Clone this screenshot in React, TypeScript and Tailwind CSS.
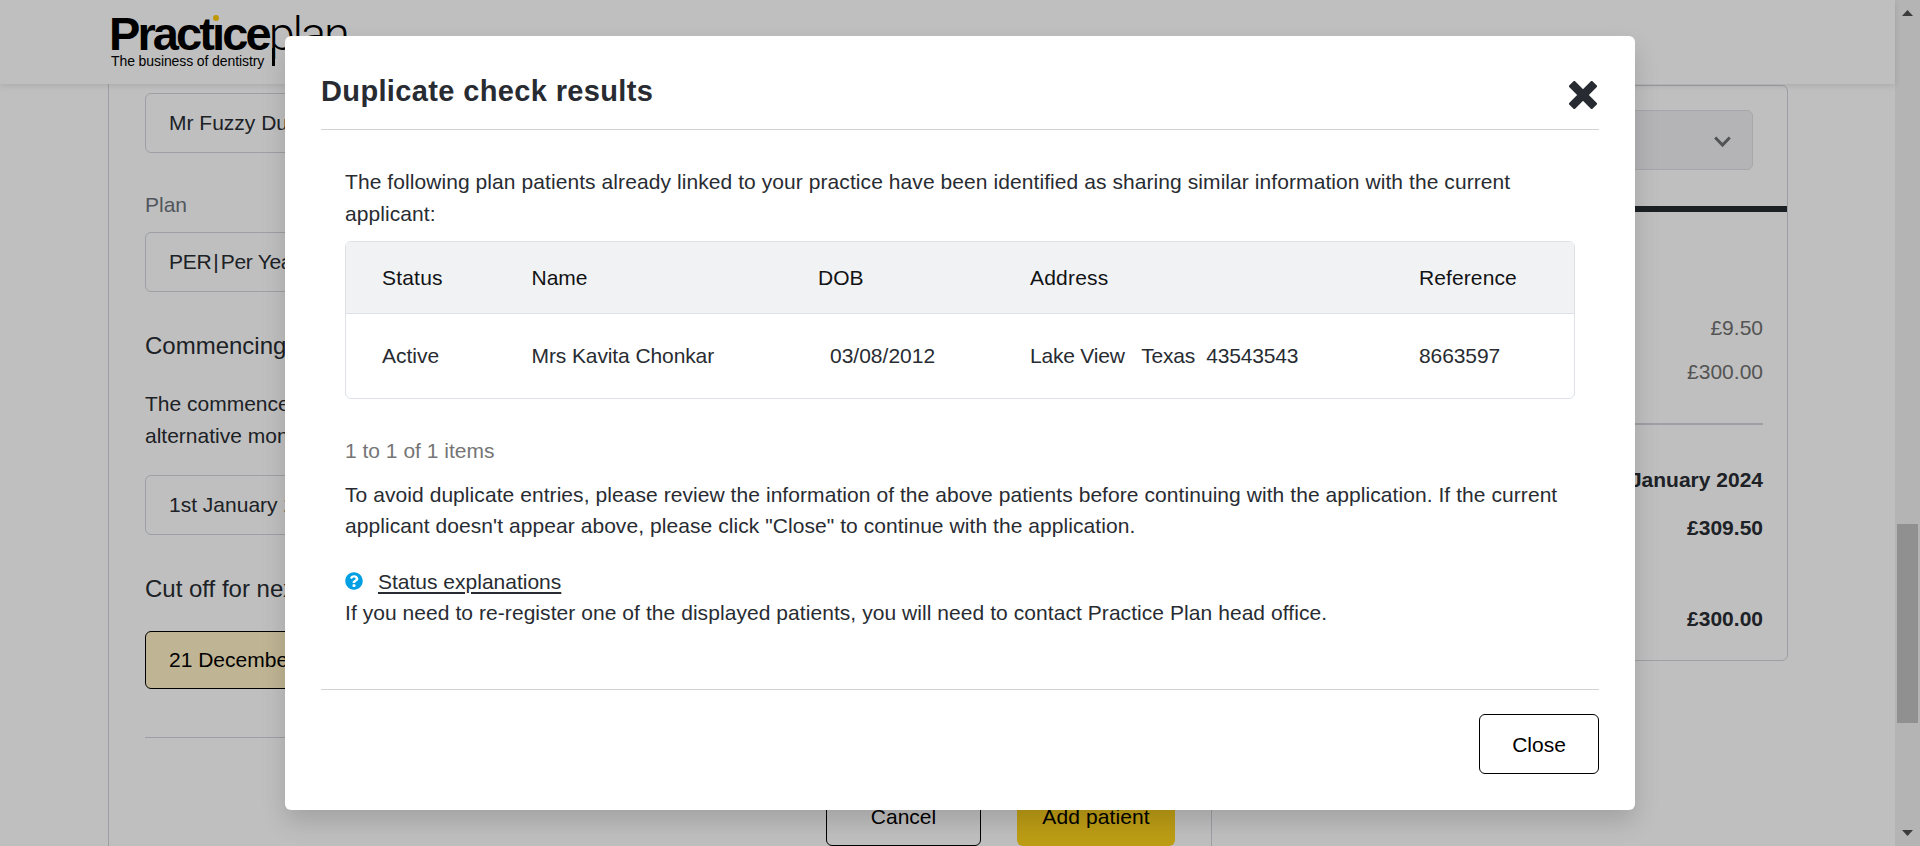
import type { ReactNode } from "react";
import { FaQuestionCircle } from "react-icons/fa";

function Field({ children, className = "" }: { children: ReactNode; className?: string }) {
  return (
    <div className={`flex items-center rounded-md border pl-[23px] pr-6 ${className}`}>{children}</div>
  );
}

function Logo() {
  return (
    <div className="ml-[109px] w-[260px] pt-[12px] text-black">
      <div className="flex h-[41px] items-baseline whitespace-nowrap leading-[44px]">
        <span className="relative text-[47px] font-bold tracking-[-2.9px]">
          Practıce
          <span className="absolute left-[103.5px] top-[3px] size-[6px] rounded-full bg-[#ffcb0a]" />
        </span>
        <span className="relative font-['Roboto'] text-[47px] font-light tracking-[-2.2px]">
          plan
          <span className="absolute left-[3px] top-[36px] h-[18px] w-[3px] bg-black" />
        </span>
      </div>
      <div className="w-[156px] whitespace-nowrap pl-[2px] text-[14px] leading-[16px] tracking-[-0.1px]">
        The business of dentistry
      </div>
    </div>
  );
}

function PatientForm() {
  return (
    <main className="ml-[108px] flex h-[762px] w-[1104px] flex-col border-x border-[#d0d4da] pl-9 pr-9">
      <Field className="mt-[9px] h-[60px] w-full shrink-0 border-[#d0d4da]">Mr Fuzzy Duck</Field>
      <label className="mt-[36px] h-[32px] leading-[32px] text-[#6c757d]">Plan</label>
      <Field className="mt-[11px] h-[60px] shrink-0 border-[#d0d4da]">
        <span className="tracking-[-0.3px]">PER</span>
        <span className="mx-[2px]">|</span>
        <span className="tracking-[-0.3px]">Per Year</span>
      </Field>
      <h3 className="mt-[38px] h-[32px] text-[24px] leading-[32px]">Commencing date</h3>
      <p className="mt-[26px] w-[1000px] leading-[32px]">
        The commencement date is the first of the month, but you may select an
        <br />
        alternative month below
      </p>
      <Field className="mt-[23px] h-[60px] shrink-0 border-[#d0d4da]">1st January 2024</Field>
      <h3 className="mt-[37px] h-[34px] text-[24px] leading-[34px]">Cut off for next collection</h3>
      <Field className="mt-[25px] h-[58px] shrink-0 border-black bg-[#fff1c4] text-black">21 December 2023</Field>
      <hr className="mt-[48px] border-[#d0d4da]" />
      <div className="mt-[48px] flex justify-end gap-9 text-black">
        <button className="h-[60px] w-[155px] rounded-md border border-black pt-[2px]">Cancel</button>
        <button className="h-[60px] w-[158px] rounded-md bg-[#fdd21d] pt-[2px] tracking-[0.1px]">Add patient</button>
      </div>
    </main>
  );
}

function Summary() {
  return (
    <aside className="mr-[107px] mt-px flex h-[576px] w-[540px] flex-col rounded-md border border-[#d0d4da]">
      <div className="ml-6 mr-[34px] mt-[24px] flex h-[60px] shrink-0 items-center justify-end rounded-md border border-[#dce0e4] bg-[#f0f1f3] pr-[21px]">
        <svg width="17" height="12" viewBox="0 0 17 12" className="mt-[3px]" fill="none" stroke="#6d6f72" strokeWidth="3">
          <path d="M1.2 1.5 8.5 9 15.8 1.5" />
        </svg>
      </div>
      <div className="mt-[36px] h-[6px] shrink-0 bg-[#252b30]" />
      <div className="flex flex-col px-6 text-right leading-[32px]">
        <span className="mt-[100px] text-[#707070]">£9.50</span>
        <span className="mt-[12px] text-[#707070]">£300.00</span>
        <hr className="mt-[35px] border-t-2 border-[#d0d4da]" />
        <b className="mt-[39px]">1st January 2024</b>
        <b className="mt-[16px]">£309.50</b>
        <b className="mt-[59px]">£300.00</b>
      </div>
    </aside>
  );
}

function Scrollbar() {
  return (
    <div className="flex h-full w-[25px] flex-col items-center bg-[#f0f0f0]">
      <svg width="11" height="6" className="mt-[10px] shrink-0" viewBox="0 0 11 6" fill="#505050">
        <path d="M0 6 5.5 0 11 6z" />
      </svg>
      <div className="mt-[508px] h-[199px] w-[21px] bg-[#c1c1c1]" />
      <svg width="11" height="6" className="mb-[10px] mt-auto shrink-0" viewBox="0 0 11 6" fill="#505050">
        <path d="M0 0 5.5 6 11 0z" />
      </svg>
    </div>
  );
}

function ResultsTable() {
  const cols = "grid grid-cols-[149.5px_286.5px_212px_389px_1fr] items-center pl-9";
  return (
    <div className="mt-[12px] h-[158px] overflow-hidden rounded-md border border-[#dee2e6]">
      <div className={`${cols} h-[72px] border-b border-[#dee2e6] bg-[#f1f2f4] text-[#111315]`}>
        <span className="tracking-[0.2px]">Status</span>
        <span>Name</span>
        <span>DOB</span>
        <span className="tracking-[0.2px]">Address</span>
        <span className="tracking-[0.1px]">Reference</span>
      </div>
      <div className={`${cols} h-[84px]`}>
        <span>Active</span>
        <span className="tracking-[-0.1px]">Mrs Kavita Chonkar</span>
        <span className="pl-3">03/08/2012</span>
        <span className="whitespace-pre tracking-[-0.2px]">Lake View   Texas  43543543</span>
        <span className="tracking-[-0.1px]">8663597</span>
      </div>
    </div>
  );
}

function Modal() {
  return (
    <section className="h-[774px] w-[1350px] rounded-[6px] bg-white px-9 shadow-[0_12px_24px_rgba(0,0,0,0.15)]">
      <header className="flex h-[94px] items-start justify-between border-b border-[#d2d3d4]">
        <h2 className="pt-[36px] text-[29px] font-bold leading-[38px] tracking-[0.36px]">Duplicate check results</h2>
        <svg
          width="28"
          height="28"
          viewBox="0 0 28 28"
          className="mr-[2.5px] mt-[44.5px]"
          fill="currentColor"
          stroke="currentColor"
          strokeWidth="3"
          strokeLinejoin="round"
        >
          <path d="M14 10.2 22.7 1.5 26.5 5.3 17.8 14 26.5 22.7 22.7 26.5 14 17.8 5.3 26.5 1.5 22.7 10.2 14 1.5 5.3 5.3 1.5z" />
        </svg>
      </header>
      <div className="h-[560px] border-b border-[#d2d3d4] px-6 pt-[36px] leading-[31.5px]">
        <p className="whitespace-nowrap tracking-[0.075px]">
          The following plan patients already linked to your practice have been identified as sharing similar
          information with the current
          <br />
          applicant:
        </p>
        <ResultsTable />
        <p className="mt-[36px] text-[#757575]">1 to 1 of 1 items</p>
        <p className="mt-[12px] whitespace-nowrap tracking-[0.065px]">
          To avoid duplicate entries, please review the information of the above patients before continuing with
          the application. If the current
          <br />
          applicant doesn't appear above, please click "Close" to continue with the application.
        </p>
        <div className="mt-[24px] flex items-center">
          <FaQuestionCircle className="mr-[15px] size-[18px] text-[#009fe3]" />
          <a className="underline decoration-2 underline-offset-[3px]">Status explanations</a>
        </div>
        <p className="tracking-[0.06px]">
          If you need to re-register one of the displayed patients, you will need to contact Practice Plan head office.
        </p>
      </div>
      <footer className="flex justify-end pt-6">
        <button className="h-[60px] w-[120px] rounded-md border border-black pt-[2px] text-black">Close</button>
      </footer>
    </section>
  );
}

export default function App() {
  return (
    <div className="relative h-[846px] w-full overflow-hidden bg-white font-['Liberation_Sans',Arial,sans-serif] text-[21px] text-[#282c32]">
      <div className="flex h-full">
        <div className="flex min-w-0 flex-1 flex-col">
          <div className="relative h-[84px] shrink-0 bg-white shadow-[0_2px_6px_rgba(0,0,0,0.1)]">
            <Logo />
          </div>
          <div className="flex justify-between">
            <PatientForm />
            <Summary />
          </div>
        </div>
        <Scrollbar />
      </div>
      <div className="absolute inset-0 flex justify-center bg-black/25 pt-9">
        <Modal />
      </div>
    </div>
  );
}
